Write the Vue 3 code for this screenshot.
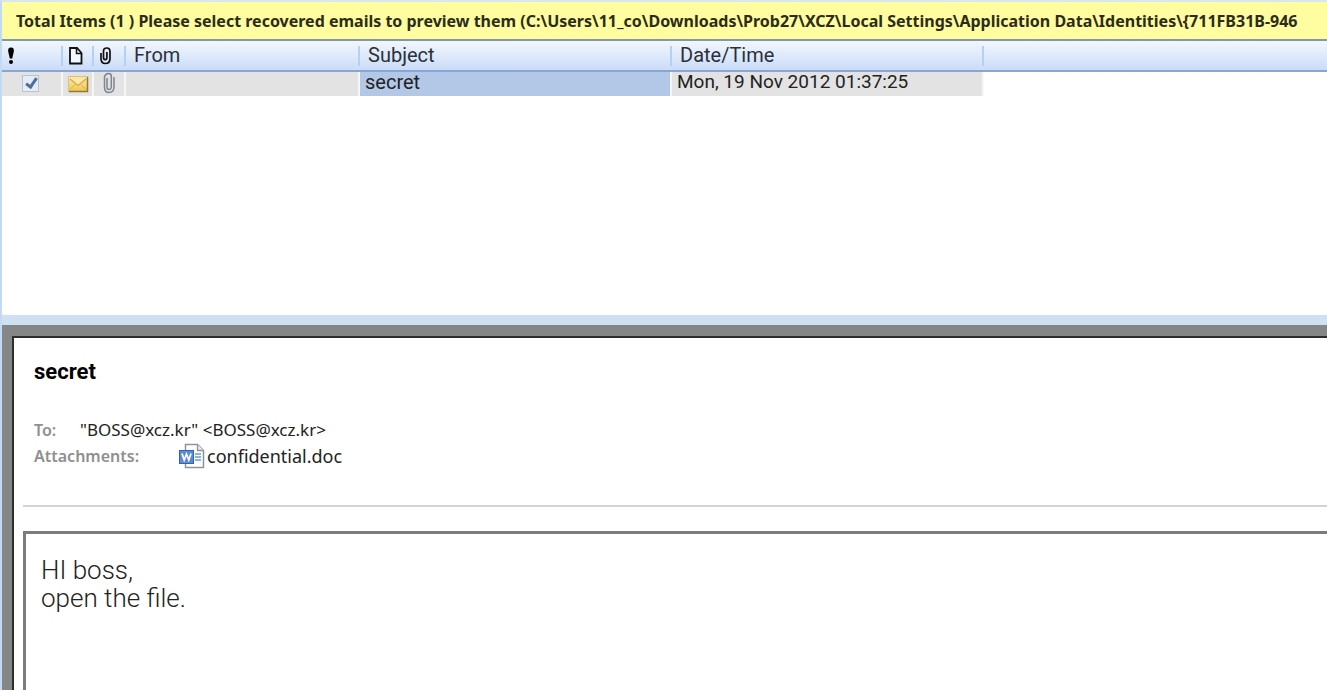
<script setup>
import { ref } from 'vue'

const path = 'C:\\Users\\11_co\\Downloads\\Prob27\\XCZ\\Local Settings\\Application Data\\Identities\\{711FB31B-946'
const mails = ref([
  { id: 1, checked: true, from: '', subject: 'secret', date: 'Mon, 19 Nov 2012 01:37:25' }
])
</script>

<template>
  <div class="app">
    <header class="banner">Total Items (1 ) Please select recovered emails to preview them ({{ path }}</header>

    <section class="list">
      <table>
        <colgroup>
          <col class="c-flag" /><col class="c-type" /><col class="c-clip" /><col class="c-from" />
          <col class="c-wide" /><col class="c-wide" /><col />
        </colgroup>
        <thead>
          <tr>
            <th class="flag">
              <svg width="8" height="18" viewBox="0 0 8 18" role="img" aria-label="Importance">
                <path d="M4 .5C1.600.5.9 2 1.200 4.500L2.800 11.500H5.200L6.800 4.500C7.100 2 6.400.5 4 .5Z" />
                <circle cx="4" cy="15" r="2" />
              </svg>
            </th>
            <th class="icon">
              <svg width="16" height="20" viewBox="0 0 16 20" role="img" aria-label="Type">
                <path d="M2 2H9L13.500 7V17.500H2Z" fill="#f4f8fe" stroke="#111" stroke-width="1.800" />
                <path d="M8.500 2V7.500H13.500" fill="none" stroke="#111" stroke-width="1.500" />
              </svg>
            </th>
            <th class="icon">
              <svg width="14" height="20" viewBox="0 0 14 20" role="img" aria-label="Attachment">
                <path d="M2 7V12.500Q2 17.500 6.500 17.500T11 12.500V5.500Q11 2 7.700 2T4.500 5.500V11.500Q4.500 13.700 6.200 13.700T7.900 11.500V6" fill="none" stroke="#111" stroke-width="1.700" />
              </svg>
            </th>
            <th>From</th>
            <th>Subject</th>
            <th>Date/Time</th>
            <th></th>
          </tr>
        </thead>
        <tbody>
          <tr v-for="mail in mails" :key="mail.id">
            <td class="tick"><input v-model="mail.checked" type="checkbox" aria-label="Select email" /></td>
            <td class="icon">
              <svg width="22" height="22" viewBox="0 -3 22 22" aria-hidden="true">
                <defs>
                  <linearGradient id="env" x1="0" y1="0" x2="0" y2="1">
                    <stop offset="0" stop-color="#fbeaac" /><stop offset="1" stop-color="#efc850" />
                  </linearGradient>
                </defs>
                <rect x="1.500" y="1.500" width="19" height="15" fill="url(#env)" stroke="#dcc07a" />
                <path d="M20.500 2V16.500H2" fill="none" stroke="#94773a" stroke-width="1.500" />
                <path d="M3 4L11 10.500L19 4" fill="#fbeaa8" stroke="#d2a949" stroke-width="1.200" />
                <path d="M3 14.500L8 9.500M19 14.500L14 9.500" stroke="#dcb04a" />
              </svg>
            </td>
            <td class="icon">
              <svg width="14" height="22" viewBox="0 0 14 22" aria-hidden="true">
                <path d="M5 6V15Q5 17.500 7 17.500T9.300 15V4Q9.300 1.500 6.500 1.500T2.500 4.500V15.500Q2.500 20.500 7 20.500T12 15.500V5" fill="none" stroke="#7e858e" stroke-width="1.500" />
              </svg>
            </td>
            <td>{{ mail.from }}</td>
            <td class="selected">{{ mail.subject }}</td>
            <td class="date">{{ mail.date }}</td>
            <td class="rest"></td>
          </tr>
        </tbody>
      </table>
    </section>

    <main class="preview">
      <article class="sheet">
        <h1>secret</h1>
        <dl class="meta">
          <div class="line">
            <dt>To:</dt>
            <dd>"BOSS@xcz.kr" &lt;BOSS@xcz.kr&gt;</dd>
          </div>
          <div class="line">
            <dt class="attach">Attachments:</dt>
            <dd class="file">
              <svg width="27" height="26" viewBox="0 0 27 26" aria-hidden="true">
                <path d="M7.500 1.500H19.500L25.500 7.500V24.500H7.500Z" fill="#fff" stroke="#8f949b" stroke-width="1.500" />
                <path d="M19.500 1.500V7.500H25.500" fill="#e9ebee" stroke="#8f949b" stroke-width="1.300" />
                <path d="M17 11H23M17 14H23M17 17H23" stroke="#6c9bdf" stroke-width="1.500" />
                <rect x="1.500" y="7.500" width="14" height="13" fill="#5b8ad6" stroke="#2f62b8" />
                <path d="M4 10.500L6.200 17L8.500 11L10.800 17L13 10.500" fill="none" stroke="#fff" stroke-width="1.700" />
              </svg>
              <a href="#">confidential.doc</a>
            </dd>
          </div>
        </dl>
        <hr />
        <div class="body">HI boss,<br />open the file.</div>
      </article>
    </main>
  </div>
</template>

<style>
body {
  margin: 0;
}
</style>

<style scoped>
.app {
  display: flex;
  flex-direction: column;
  height: 100vh;
  overflow: hidden;
  box-sizing: border-box;
  border-top: 2px solid #d9e6ee;
  border-left: 2px solid #c3daf3;
  background: #fff;
  color: #222;
  font-family: Roboto, "Liberation Sans", sans-serif;
}

.banner {
  flex: none;
  height: 37px;
  padding-left: 14px;
  border-bottom: 2px solid #8296ac;
  background: #fffd9f;
  color: #2c2c18;
  font: 700 16px/38px "Noto Sans", "Open Sans", sans-serif;
  white-space: nowrap;
  overflow: hidden;
}

.list {
  flex: 0 0 274px;
}

table {
  width: 100%;
  table-layout: fixed;
  border-collapse: separate;
  border-spacing: 0;
  font-size: 20px;
}

.c-flag { width: 61px; }
.c-type { width: 31px; }
.c-clip { width: 32px; }
.c-from { width: 234px; }
.c-wide { width: 312px; }

th,
td {
  box-sizing: border-box;
}

th {
  height: 31px;
  padding: 0 0 2px 8px;
  border-bottom: 2px solid #86a5d8;
  background:
    linear-gradient(#b4d0f6, #b4d0f6) right 5px / 2px 20px no-repeat,
    linear-gradient(#f2f7fe, #cbdcf8);
  color: #2b303a;
  font-weight: 400;
  line-height: 26px;
  text-align: left;
}

th:last-child {
  background: linear-gradient(#f2f7fe, #cbdcf8);
}

th.flag {
  padding-left: 5px;
}

th.icon {
  padding-left: 5px;
}

td {
  height: 24px;
  padding: 0 0 0 5px;
  border-right: 2px solid #f6f6f6;
  background: #e3e3e3;
  line-height: 20px;
  vertical-align: top;
}

td.icon {
  padding: 0;
}

td.icon svg {
  display: block;
  margin: 0 auto;
}

td.selected {
  background: #b3c7e7;
}

td.date {
  font-size: 19px;
}

td.rest {
  border: 0;
  background: #fff;
}

td.tick {
  padding: 3px 0 0 20px;
}

svg {
  display: inline-block;
  vertical-align: middle;
}

input {
  position: relative;
  display: block;
  box-sizing: border-box;
  appearance: none;
  width: 17px;
  height: 17px;
  margin: 0;
  border: 1px solid #b5c3d2;
  background: #e6ecf4;
}

input:checked::after {
  content: "";
  position: absolute;
  left: 5px;
  top: 0;
  width: 4px;
  height: 9px;
  border: solid #4e6f9f;
  border-width: 0 3px 3px 0;
  transform: rotate(35deg);
}

.preview {
  flex: 1;
  min-height: 0;
  padding: 11px 0 0 10px;
  border-top: 10px solid #cfe0f3;
  background: #858787;
}

.sheet {
  display: flex;
  flex-direction: column;
  box-sizing: border-box;
  height: 100%;
  border-top: 2px solid #2e2e2e;
  border-left: 2px solid #2e2e2e;
  padding: 21px 0 0 9px;
  background: #fff;
}

h1 {
  margin: 0 0 32px 11px;
  color: #000;
  font: 700 22px/26px Roboto, sans-serif;
}

.meta {
  margin: 0 0 0 11px;
  font: 17px/26px "Noto Sans", "Open Sans", sans-serif;
}

.line {
  display: flex;
  height: 26px;
}

dt {
  width: 46px;
  color: #8f8f8f;
  font-weight: 600;
  font-size: 16px;
}

dt.attach {
  width: 144px;
}

dd {
  margin: 0;
  color: #222;
}

.file {
  display: flex;
  align-items: center;
  gap: 2px;
  font-size: 18px;
}

a {
  color: inherit;
  text-decoration: none;
}

hr {
  width: 100%;
  margin: 36px 0 24px;
  border: 0;
  border-top: 2px solid #d4d4d4;
}

.body {
  flex: 1;
  padding: 22px 15px;
  border-top: 3px solid #7c7c7c;
  border-left: 3px solid #7c7c7c;
  color: #222;
  font: 300 26px/28px Roboto, sans-serif;
}
</style>
